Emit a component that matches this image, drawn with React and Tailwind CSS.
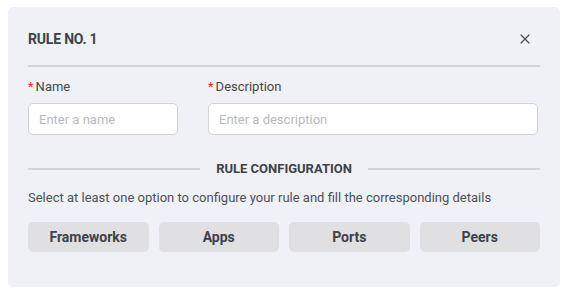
import { X } from 'lucide-react';

const options = ['Frameworks', 'Apps', 'Ports', 'Peers'];

function Field({ label, placeholder, className }) {
  return (
    <div className={className}>
      <label className="flex h-4 items-center text-[13px] leading-4 text-[#44474d]">
        <span className="mr-[2px] text-[#f5222d]">*</span>
        {label}
      </label>
      <input
        placeholder={placeholder}
        className="mt-2 h-8 w-full rounded-[5px] border border-[#d3d3d6] bg-white px-[10px] text-[13px] text-[#333] outline-none placeholder:text-[#b9b9bd]"
      />
    </div>
  );
}

export default function App() {
  return (
    <div className="min-h-screen bg-white px-2 pt-[7px]" style={{ fontFamily: 'Roboto, "Liberation Sans", sans-serif' }}>
      <div className="w-[552px] rounded-[5px] bg-[#f0f1f6] px-5 pb-[35px] pt-5">
        <div className="flex h-6 items-center justify-between">
          <h2 className="text-[14px] font-bold uppercase tracking-[-0.2px] text-[#3d4148]">Rule No. 1</h2>
          <button type="button" className="mr-[7px] text-[#4a4d52]">
            <X className="h-4 w-4" strokeWidth={1.8} />
          </button>
        </div>
        <div className="mt-[14px] h-[2px] bg-[#d3d3d6]" />

        <div className="mt-3 flex gap-[30px]">
          <Field label="Name" placeholder="Enter a name" className="w-[150px] shrink-0" />
          <Field label="Description" placeholder="Enter a description" className="flex-1 pr-[2px]" />
        </div>

        <div className="mt-6 flex h-5 items-center gap-4">
          <div className="h-[2px] flex-1 bg-[#d3d3d6]" />
          <span className="text-[13px] font-bold uppercase text-[#3d4148]">Rule Configuration</span>
          <div className="h-[2px] flex-1 bg-[#d3d3d6]" />
        </div>

        <p className="mt-[10px] text-[13px] leading-[18px] text-[#4d5057]">
          Select at least one option to configure your rule and fill the corresponding details
        </p>

        <div className="mt-[15px] grid grid-cols-4 gap-[10px]">
          {options.map((opt) => (
            <button
              key={opt}
              type="button"
              className="h-[30px] rounded-[5px] bg-[#e0e0e3] text-[14px] font-bold text-[#3d4148]"
            >
              {opt}
            </button>
          ))}
        </div>
      </div>
    </div>
  );
}
